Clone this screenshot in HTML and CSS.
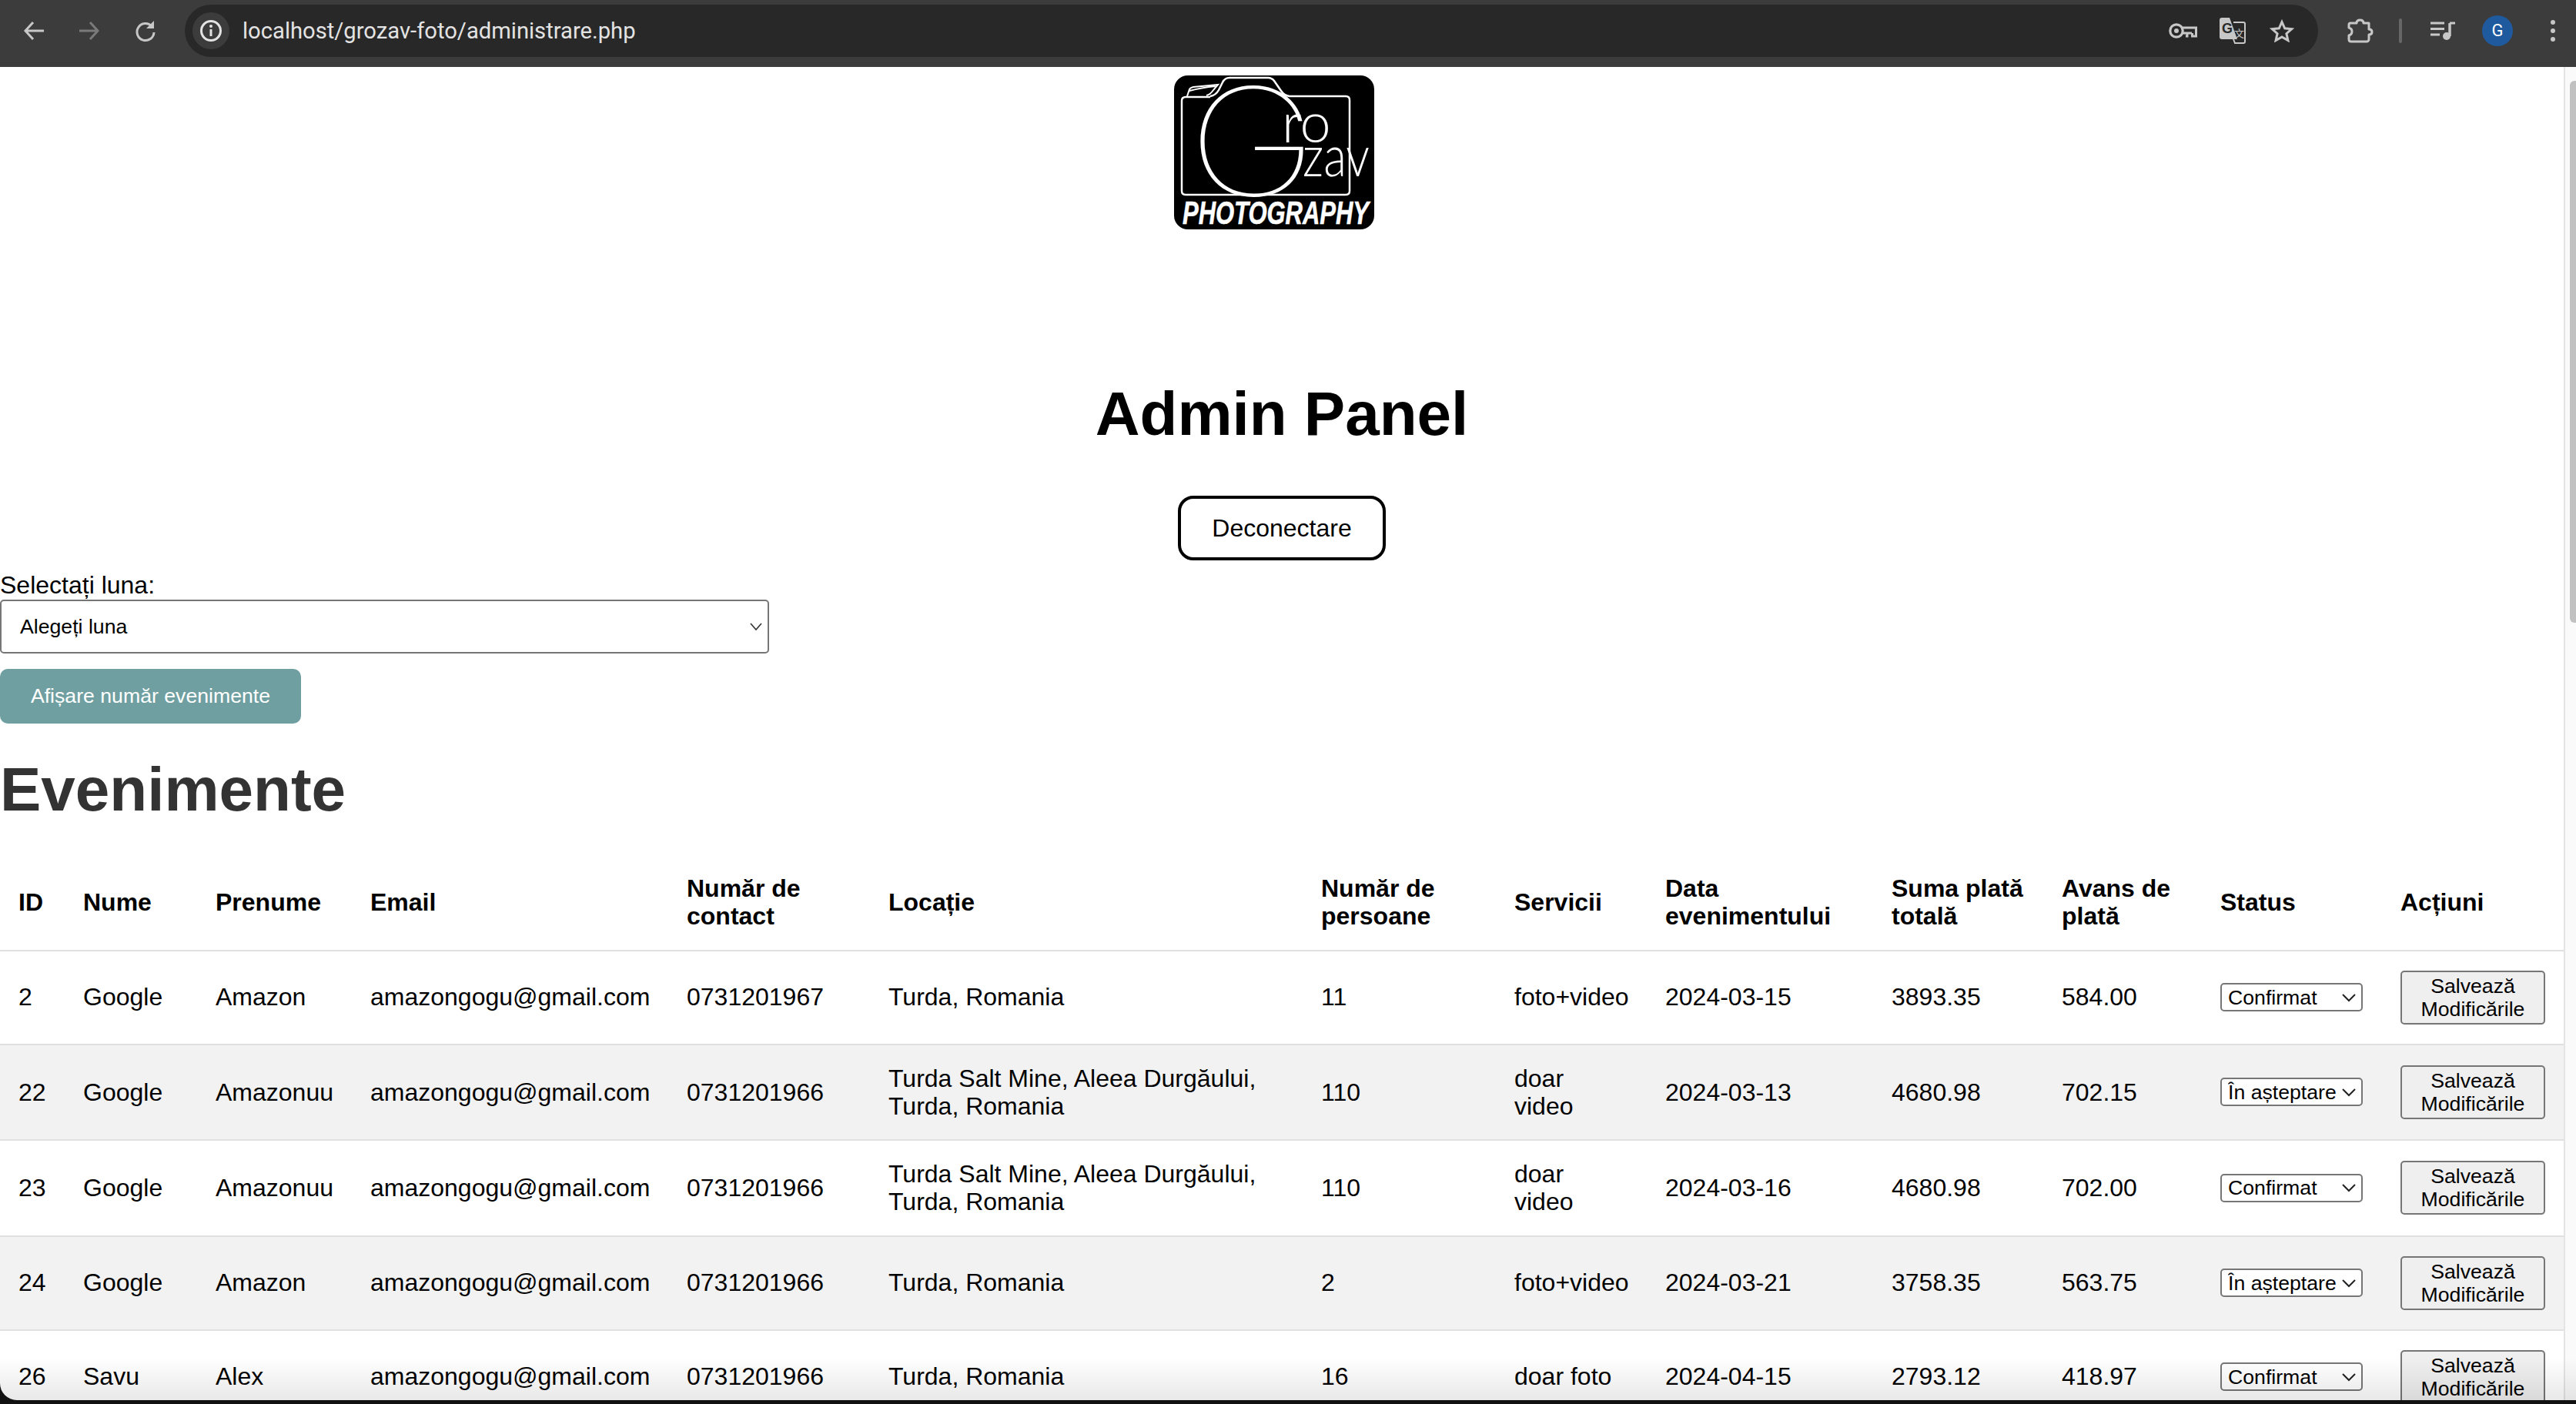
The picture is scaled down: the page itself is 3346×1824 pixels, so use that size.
FILE: index.html
```html
<!DOCTYPE html>
<html lang="ro">
<head>
    <meta charset="UTF-8">
    <title>Admin Panel</title>
    <link rel="stylesheet" href="styles.css">
</head>
<body>
    <header class="toolbar">
        <div class="nav-icons">
            <svg class="icon" viewBox="0 0 32 32"><path d="M29 16H6M15 5L5 16l10 11" fill="none" stroke="#c7c7c7" stroke-width="3"/></svg>
            <svg class="icon" viewBox="0 0 32 32"><path d="M3 16h23M17 5l10 11-10 11" fill="none" stroke="#7a7a7a" stroke-width="3"/></svg>
            <svg class="icon" viewBox="0 0 32 32"><path d="M25 10a11 11 0 1 0 3 8" fill="none" stroke="#c7c7c7" stroke-width="3"/><path d="M28 3v10H18z" fill="#c7c7c7"/></svg>
        </div>
        <div class="omnibox">
            <span class="site-info">
                <svg viewBox="0 0 32 32" width="32" height="32"><circle cx="16" cy="16" r="12.500" fill="none" stroke="#e3e3e3" stroke-width="3"/><path d="M16 14v9" stroke="#e3e3e3" stroke-width="3"/><circle cx="16" cy="10" r="2" fill="#e3e3e3"/></svg>
            </span>
            <span class="url">localhost/grozav-foto/administrare.php</span>
            <div class="omni-actions">
                <svg class="key-icon" viewBox="0 0 37 20"><circle cx="10" cy="10" r="8.200" fill="none" stroke="#c7c7c7" stroke-width="3.200"/><circle cx="10" cy="10" r="3" fill="#c7c7c7"/><path d="M18 6h17.500v11h-5v-4M24 13v4h-2M18 13h12" fill="none" stroke="#c7c7c7" stroke-width="3"/></svg>
                <svg class="translate-icon" viewBox="0 0 34 34"><path d="M3 0h10l10 28H3a3 3 0 0 1-3-3V3a3 3 0 0 1 3-3z" fill="#c7c7c7"/><path d="M18 6h13a2 2 0 0 1 2 2v23a2 2 0 0 1-2 2H20l-2-5" fill="none" stroke="#c7c7c7" stroke-width="2"/><text x="3" y="20" class="translate-g">G</text><text x="19" y="25" class="translate-x">文</text></svg>
                <svg class="star-icon" viewBox="0 0 32 30"><path d="M16 3.500l3.700 8.300 9 .9-6.800 6 2 8.800L16 22.900l-7.900 4.600 2-8.800-6.800-6 9-.9z" fill="none" stroke="#c7c7c7" stroke-width="3"/></svg>
            </div>
        </div>
        <div class="toolbar-actions">
            <svg class="puzzle-icon" viewBox="0 0 34 32"><path d="M4 6h8q0-4 4.500-4T21 6h7v8q4 0 4 3.500T28 21v6a3 3 0 0 1-3 3H5q-3 0-3-3v-5q4-1 4-5t-4-5V8q0-2 2-2z" fill="none" stroke="#c7c7c7" stroke-width="3" stroke-linejoin="round"/></svg>
            <span class="divider"></span>
            <svg class="music-icon" viewBox="0 0 32 24"><path d="M0 2h18M0 9.500h18M0 17h12" stroke="#c7c7c7" stroke-width="3"/><path d="M25 2v17" stroke="#c7c7c7" stroke-width="3.500"/><path d="M25 2h7" stroke="#c7c7c7" stroke-width="3"/><circle cx="21" cy="19" r="5" fill="#c7c7c7"/></svg>
            <span class="avatar">G</span>
            <svg class="icon" viewBox="0 0 32 32"><circle cx="16" cy="5" r="3" fill="#c7c7c7"/><circle cx="16" cy="16" r="3" fill="#c7c7c7"/><circle cx="16" cy="27" r="3" fill="#c7c7c7"/></svg>
        </div>
    </header>

    <div class="viewport">
        <main class="page">
            <div class="logo-wrap">
                <svg class="logo" viewBox="0 0 260 200">
                    <rect width="260" height="200" rx="18" fill="#000"/>
                    <path d="M47 27q7-1 11-8l5-10q3-6 9-6h50q5 0 8 4l9 13q4 6 11 7h73q5 0 5 5v118q0 5-5 5H15q-5 0-5-5V33q0-5 5-5h32" fill="none" stroke="#fff" stroke-width="2.500"/>
                    <path d="M17 27l3-9q1-2 5-3l32-3-6 7q-4 6-9 7M20 20q15-4 34-6" fill="none" stroke="#fff" stroke-width="2"/>
                    <text x="18" y="156" class="logo-g" textLength="168" lengthAdjust="spacingAndGlyphs">G</text>
                    <text x="140" y="87" class="logo-ro">ro</text>
                    <text x="167" y="131" class="logo-zav" textLength="87" lengthAdjust="spacingAndGlyphs">zav</text>
                    <text x="11" y="193" class="logo-tag" textLength="242" lengthAdjust="spacingAndGlyphs">PHOTOGRAPHY</text>
                </svg>
            </div>

            <h1 class="title">Admin Panel</h1>
            <div class="logout-wrap">
                <button class="logout-btn" type="button">Deconectare</button>
            </div>

            <form class="month-form">
                <label class="month-label" for="month">Selectați luna:</label>
                <select class="month-select" id="month">
                    <option>Alegeți luna</option>
                </select>
                <button class="count-btn" type="button">Afișare număr evenimente</button>
            </form>

            <h2 class="section-title">Evenimente</h2>

            <table class="events">
                <colgroup>
                    <col class="c-id"><col class="c-nume"><col class="c-prenume"><col class="c-email"><col class="c-contact"><col class="c-locatie"><col class="c-persoane"><col class="c-servicii"><col class="c-data"><col class="c-suma"><col class="c-avans"><col class="c-status"><col class="c-actiuni">
                </colgroup>
                <thead>
                    <tr>
                        <th>ID</th><th>Nume</th><th>Prenume</th><th>Email</th><th>Număr de contact</th><th>Locație</th><th>Număr de persoane</th><th>Servicii</th><th>Data evenimentului</th><th>Suma plată totală</th><th>Avans de plată</th><th>Status</th><th>Acțiuni</th>
                    </tr>
                </thead>
                <tbody>
                    <tr>
                        <td>2</td><td>Google</td><td>Amazon</td><td>amazongogu@gmail.com</td><td>0731201967</td><td>Turda, Romania</td><td>11</td><td>foto+video</td><td>2024-03-15</td><td>3893.35</td><td>584.00</td>
                        <td><select class="status-select"><option>Confirmat</option><option>În așteptare</option></select></td>
                        <td><button class="save-btn" type="button">Salvează Modificările</button></td>
                    </tr>
                    <tr>
                        <td>22</td><td>Google</td><td>Amazonuu</td><td>amazongogu@gmail.com</td><td>0731201966</td><td>Turda Salt Mine, Aleea Durgăului, Turda, Romania</td><td>110</td><td>doar video</td><td>2024-03-13</td><td>4680.98</td><td>702.15</td>
                        <td><select class="status-select"><option>În așteptare</option><option>Confirmat</option></select></td>
                        <td><button class="save-btn" type="button">Salvează Modificările</button></td>
                    </tr>
                    <tr>
                        <td>23</td><td>Google</td><td>Amazonuu</td><td>amazongogu@gmail.com</td><td>0731201966</td><td>Turda Salt Mine, Aleea Durgăului, Turda, Romania</td><td>110</td><td>doar video</td><td>2024-03-16</td><td>4680.98</td><td>702.00</td>
                        <td><select class="status-select"><option>Confirmat</option><option>În așteptare</option></select></td>
                        <td><button class="save-btn" type="button">Salvează Modificările</button></td>
                    </tr>
                    <tr>
                        <td>24</td><td>Google</td><td>Amazon</td><td>amazongogu@gmail.com</td><td>0731201966</td><td>Turda, Romania</td><td>2</td><td>foto+video</td><td>2024-03-21</td><td>3758.35</td><td>563.75</td>
                        <td><select class="status-select"><option>În așteptare</option><option>Confirmat</option></select></td>
                        <td><button class="save-btn" type="button">Salvează Modificările</button></td>
                    </tr>
                    <tr>
                        <td>26</td><td>Savu</td><td>Alex</td><td>amazongogu@gmail.com</td><td>0731201966</td><td>Turda, Romania</td><td>16</td><td>doar foto</td><td>2024-04-15</td><td>2793.12</td><td>418.97</td>
                        <td><select class="status-select"><option>Confirmat</option><option>În așteptare</option></select></td>
                        <td><button class="save-btn" type="button">Salvează Modificările</button></td>
                    </tr>
                </tbody>
            </table>
        </main>
        <div class="scrollbar"><div class="scroll-thumb"></div></div>
    </div>
</body>
</html>
```

FILE: styles.css
```css
html, body {
    height: 100%;
    margin: 0;
    overflow: hidden;
}
body {
    display: flex;
    flex-direction: column;
    font-family: "Liberation Sans", Arial, sans-serif;
    font-size: 32px;
    color: #000;
    background: #111;
}

/* browser chrome */
.toolbar {
    flex: 0 0 87px;
    display: flex;
    align-items: center;
    background: #3c3c3c;
    padding: 0 0 7px 28px;
    box-sizing: border-box;
}
.icon {
    width: 32px;
    height: 32px;
    flex: none;
}
.nav-icons {
    display: flex;
    gap: 40px;
    flex: 0 0 212px;
}
.omnibox {
    flex: 0 0 2771px;
    height: 68px;
    display: flex;
    align-items: center;
    background: #282828;
    border-radius: 34px;
    padding: 0 31px 0 10px;
    box-sizing: border-box;
}
.site-info {
    width: 48px;
    height: 48px;
    border-radius: 50%;
    background: #3c3c3c;
    display: flex;
    align-items: center;
    justify-content: center;
}
.url {
    margin-left: 17px;
    flex: 1;
    font-family: Roboto, sans-serif;
    font-size: 29.2px;
    color: #e3e3e3;
}
.omni-actions {
    display: flex;
    align-items: center;
}
.key-icon {
    width: 37px;
    height: 20px;
}
.translate-icon {
    width: 34px;
    height: 34px;
    margin-left: 29px;
}
.star-icon {
    width: 32px;
    height: 30px;
    margin-left: 31px;
}
.translate-g {
    font-family: "Liberation Sans", sans-serif;
    font-size: 18px;
    font-weight: bold;
    fill: #282828;
}
.translate-x {
    font-family: "Noto Sans CJK SC", sans-serif;
    font-size: 13px;
    fill: #c7c7c7;
}
.toolbar-actions {
    display: flex;
    align-items: center;
    margin-left: 38px;
}
.puzzle-icon {
    width: 34px;
    height: 32px;
}
.divider {
    width: 4px;
    height: 32px;
    border-radius: 2px;
    background: #666;
    margin: 0 37px 0 33px;
}
.music-icon {
    width: 32px;
    height: 24px;
}
.avatar {
    width: 40px;
    height: 40px;
    margin: 0 36px 0 35px;
    border-radius: 50%;
    background: #1f5a9e;
    color: #fff;
    font-family: Roboto, sans-serif;
    font-size: 22px;
    line-height: 40px;
    text-align: center;
}

/* page area */
.viewport {
    position: relative;
    flex: 1;
    min-height: 0;
    display: flex;
    overflow: hidden;
    background: #fff;
    margin-bottom: 5px;
    border-bottom-left-radius: 22px;
}
.viewport::after {
    content: "";
    position: absolute;
    left: 0;
    right: 0;
    bottom: 0;
    height: 55px;
    background: linear-gradient(rgba(0, 0, 0, 0), rgba(0, 0, 0, 0.09));
    pointer-events: none;
}
.page {
    flex: 1;
    min-width: 0;
    overflow: hidden;
}
.scrollbar {
    flex: 0 0 16px;
    background: #fafafa;
    border-left: 2px solid #e4e4e4;
    box-sizing: border-box;
    padding: 18px 0 0 6px;
}
.scroll-thumb {
    height: 704px;
    background: #c1c1c1;
    border-radius: 6px 0 0 6px;
}

/* logo */
.logo-wrap {
    display: flex;
    justify-content: center;
    padding: 11px 20px 0 0;
}
.logo {
    display: block;
    width: 260px;
    height: 200px;
}
.logo-g {
    font-family: Inter, sans-serif;
    font-weight: 100;
    font-size: 194px;
    fill: #fff;
}
.logo-ro {
    font-family: Lato, sans-serif;
    font-weight: 300;
    font-size: 72px;
    fill: #fff;
}
.logo-zav {
    font-family: Lato, sans-serif;
    font-weight: 300;
    font-size: 74px;
    fill: #fff;
}
.logo-tag {
    font-family: "Liberation Sans", sans-serif;
    font-weight: bold;
    font-style: italic;
    font-size: 42px;
    fill: #fff;
    stroke: #fff;
    stroke-width: 0.6px;
}

/* heading and logout */
.title {
    font-size: 80px;
    line-height: 92px;
    text-align: center;
    margin: 194px 0 0;
}
.logout-wrap {
    display: flex;
    justify-content: center;
    margin-top: 60px;
}
.logout-btn {
    width: 270px;
    height: 84px;
    font: 32px "Liberation Sans", sans-serif;
    color: #000;
    background: #fff;
    border: 4px solid #000;
    border-radius: 20px;
}

/* month filter */
.month-form {
    margin-top: 14px;
}
.month-label {
    display: block;
    line-height: 37px;
}
.month-select {
    display: block;
    width: 999px;
    height: 70px;
    appearance: none;
    font: 26.67px "Liberation Sans", sans-serif;
    color: #000;
    padding: 0 0 0 24px;
    border: 2px solid #767676;
    border-radius: 5px;
    background: #fff url("data:image/svg+xml,%3Csvg xmlns='http://www.w3.org/2000/svg' width='20' height='20'%3E%3Cpath d='M3 6l7 8 7-8' fill='none' stroke='%23333' stroke-width='1.6'/%3E%3C/svg%3E") no-repeat right 5px center;
}
.count-btn {
    display: block;
    width: 391px;
    height: 71px;
    margin-top: 20px;
    font: 26.67px "Liberation Sans", sans-serif;
    color: #fff;
    background: #6f9fa1;
    border: 0;
    border-radius: 10px;
    padding: 0;
}

.section-title {
    font-size: 80px;
    line-height: 92px;
    color: #333;
    margin: 40px 0 0;
}

/* table */
.events {
    width: 3330px;
    table-layout: fixed;
    border-collapse: collapse;
    margin-top: 39px;
}
.c-id { width: 84px; }
.c-nume { width: 172px; }
.c-prenume { width: 201px; }
.c-email { width: 411px; }
.c-contact { width: 262px; }
.c-locatie { width: 562px; }
.c-persoane { width: 251px; }
.c-servicii { width: 196px; }
.c-data { width: 294px; }
.c-suma { width: 221px; }
.c-avans { width: 206px; }
.c-status { width: 234px; }
.c-actiuni { width: 236px; }

.events th,
.events td {
    padding: 25px 24px;
    line-height: 36.25px;
    text-align: left;
    border-bottom: 2px solid #e0e0e0;
}
.events tbody tr:nth-child(even) {
    background: #f2f2f2;
}
.status-select {
    display: block;
    width: 185px;
    height: 37px;
    appearance: none;
    font: 26.67px "Liberation Sans", sans-serif;
    color: #000;
    padding: 0 0 0 8px;
    border: 2px solid #767676;
    border-radius: 5px;
    background: #fff url("data:image/svg+xml,%3Csvg xmlns='http://www.w3.org/2000/svg' width='20' height='20'%3E%3Cpath d='M2 6l8 8 8-8' fill='none' stroke='%23222' stroke-width='2'/%3E%3C/svg%3E") no-repeat right 6px center;
}
.save-btn {
    display: block;
    width: 188px;
    height: 70px;
    padding: 0;
    font: 26.67px/30px "Liberation Sans", sans-serif;
    color: #000;
    background: #efefef;
    border: 2px solid #767676;
    border-radius: 5px;
}
```
